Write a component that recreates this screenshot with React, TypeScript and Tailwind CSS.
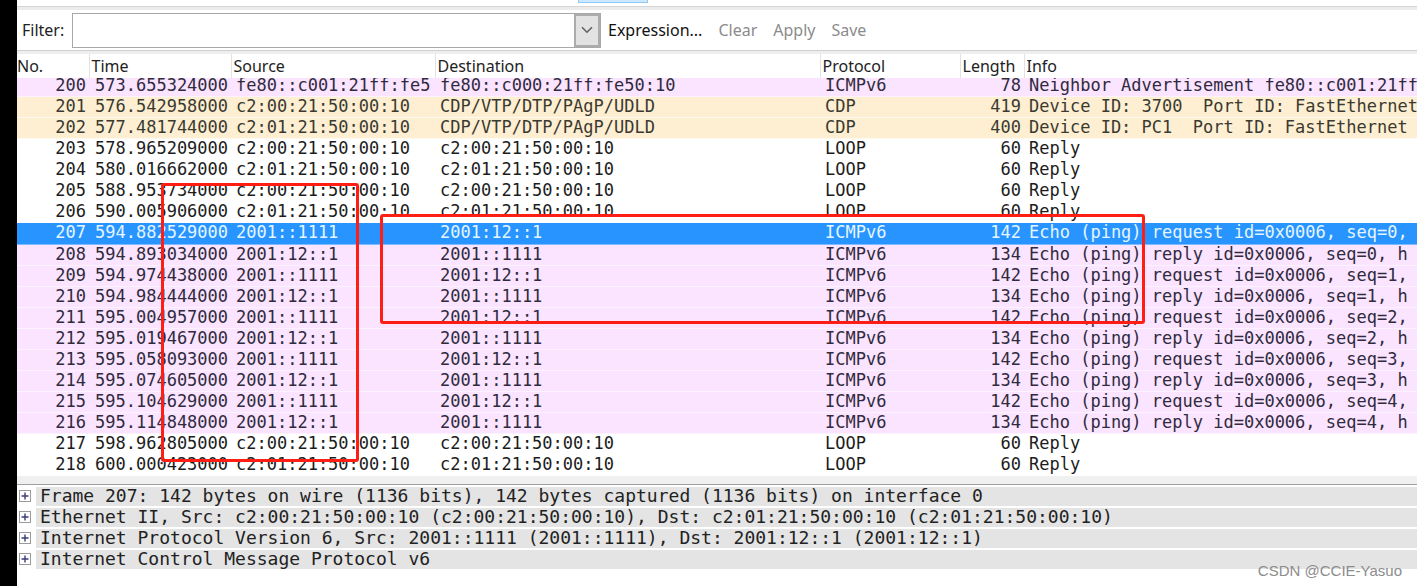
import React from "react";

type Tone = "icmp" | "cdp" | "plain" | "selected";

interface Packet {
  no: number;
  time: string;
  source: string;
  destination: string;
  protocol: string;
  length: number;
  info: string;
  tone: Tone;
}

const HOST_0 = "c2:00:21:50:00:10";
const HOST_1 = "c2:01:21:50:00:10";

const loop = (no: number, time: string, host: string): Packet => ({
  no,
  time,
  source: host,
  destination: host,
  protocol: "LOOP",
  length: 60,
  info: "Reply",
  tone: "plain",
});

const cdp = (no: number, time: string, host: string, length: number, info: string): Packet => ({
  no,
  time,
  source: host,
  destination: "CDP/VTP/DTP/PAgP/UDLD",
  protocol: "CDP",
  length,
  info,
  tone: "cdp",
});

const ping = (no: number, time: string, kind: "request" | "reply", seq: number, tone: Tone = "icmp"): Packet => ({
  no,
  time,
  source: kind === "request" ? "2001::1111" : "2001:12::1",
  destination: kind === "request" ? "2001:12::1" : "2001::1111",
  protocol: "ICMPv6",
  length: kind === "request" ? 142 : 134,
  info: kind === "request" ? `Echo (ping) request id=0x0006, seq=${seq},` : `Echo (ping) reply id=0x0006, seq=${seq}, h`,
  tone,
});

const packets: Packet[] = [
  {
    no: 200,
    time: "573.655324000",
    source: "fe80::c001:21ff:fe5",
    destination: "fe80::c000:21ff:fe50:10",
    protocol: "ICMPv6",
    length: 78,
    info: "Neighbor Advertisement fe80::c001:21ff",
    tone: "icmp",
  },
  cdp(201, "576.542958000", HOST_0, 419, "Device ID: 3700  Port ID: FastEthernet"),
  cdp(202, "577.481744000", HOST_1, 400, "Device ID: PC1  Port ID: FastEthernet"),
  loop(203, "578.965209000", HOST_0),
  loop(204, "580.016662000", HOST_1),
  loop(205, "588.953734000", HOST_0),
  loop(206, "590.005906000", HOST_1),
  ping(207, "594.882529000", "request", 0, "selected"),
  ping(208, "594.893034000", "reply", 0),
  ping(209, "594.974438000", "request", 1),
  ping(210, "594.984444000", "reply", 1),
  ping(211, "595.004957000", "request", 2),
  ping(212, "595.019467000", "reply", 2),
  ping(213, "595.058093000", "request", 3),
  ping(214, "595.074605000", "reply", 3),
  ping(215, "595.104629000", "request", 4),
  ping(216, "595.114848000", "reply", 4),
  loop(217, "598.962805000", HOST_0),
  loop(218, "600.000423000", HOST_1),
];

const toneClass: Record<Tone, string> = {
  icmp: "h-[21px] bg-[#fbe4ff] text-[#2f2b3d] border-b border-[#fdf3ff]",
  cdp: "h-[21px] bg-[#ffefd2] text-[#3a3a30] border-b border-[#fffaf0]",
  plain: "h-[21px] bg-white text-[#1c1c1c] border-b border-white",
  selected: "h-[22px] bg-[#2894ff] text-[#e4f6ff] border-b border-[#7fbcff]",
};

const details = [
  "Frame 207: 142 bytes on wire (1136 bits), 142 bytes captured (1136 bits) on interface 0",
  "Ethernet II, Src: c2:00:21:50:00:10 (c2:00:21:50:00:10), Dst: c2:01:21:50:00:10 (c2:01:21:50:00:10)",
  "Internet Protocol Version 6, Src: 2001::1111 (2001::1111), Dst: 2001:12::1 (2001:12::1)",
  "Internet Control Message Protocol v6",
];

const columns = [
  { label: "No.", className: "w-[72px]" },
  { label: "Time", className: "w-[142px] border-l pl-[2px]" },
  { label: "Source", className: "w-[204px] border-l pl-[2px]" },
  { label: "Destination", className: "w-[385px] border-l pl-[2px]" },
  { label: "Protocol", className: "w-[140px] border-l pl-[2px]" },
  { label: "Length", className: "w-[64px] border-l pl-[2px]" },
  { label: "Info", className: "border-l pl-[2px]" },
];

function FilterBar() {
  return (
    <form className="flex h-10 items-center pl-[5px]" onSubmit={(e) => e.preventDefault()}>
      <label htmlFor="filter" className="w-[50px] text-[#222]">
        Filter:
      </label>
      <div className="flex h-[35px] w-[529px] border border-[#a8a8a8] bg-white">
        <input id="filter" type="text" className="min-w-0 flex-1 px-2 outline-none" />
        <button
          type="button"
          aria-label="Filter history"
          className="flex w-[26px] items-center justify-center border-2 border-[#acacac] bg-[#e2e2e2]"
        >
          <svg width="12" height="8" viewBox="0 0 12 8" fill="none" stroke="#606060" strokeWidth="1.6">
            <path d="M1 1.2 6 6.2 11 1.2" />
          </svg>
        </button>
      </div>
      <div className="flex gap-4 pl-[7px]">
        <button type="button" className="text-[#111]">
          Expression...
        </button>
        <button type="button" disabled className="text-[#8b8b8b]">
          Clear
        </button>
        <button type="button" disabled className="text-[#8b8b8b]">
          Apply
        </button>
        <button type="button" disabled className="text-[#8b8b8b]">
          Save
        </button>
      </div>
    </form>
  );
}

function PacketRow({ packet, clipped }: { packet: Packet; clipped: boolean }) {
  const line = clipped
    ? "flex h-[17px] flex-col justify-end overflow-hidden whitespace-pre leading-5"
    : "overflow-hidden whitespace-pre leading-[19px]";
  return (
    <tr
      className={
        clipped
          ? "h-[18px] border-b border-[#fdf3ff] bg-[#fbe4ff] align-top text-[#2f2b3d]"
          : `${toneClass[packet.tone]} align-top`
      }
    >
      <td className="p-0 pr-[3px] text-right"><div className={line}>{packet.no}</div></td>
      <td className="p-0 pl-[6px]"><div className={line}>{packet.time}</div></td>
      <td className="p-0 pl-[5px]"><div className={line}>{packet.source}</div></td>
      <td className="p-0 pl-[5px]"><div className={line}>{packet.destination}</div></td>
      <td className="p-0 pl-[5px]"><div className={line}>{packet.protocol}</div></td>
      <td className="p-0 pr-[3px] text-right"><div className={line}>{packet.length}</div></td>
      <td className="p-0 pl-[5px]"><div className={line}>{packet.info}</div></td>
    </tr>
  );
}

function PacketList() {
  return (
    <table className="w-full table-fixed border-collapse">
      <thead>
        <tr className="h-6 text-left text-[#222]">
          {columns.map((c) => (
            <th key={c.label} scope="col" className={`${c.className} border-[#e2e2e2] py-0 pr-0 font-normal leading-6`}>
              {c.label}
            </th>
          ))}
        </tr>
      </thead>
      <tbody className="font-['DejaVu_Sans_Mono',monospace] text-[17px]">
        {packets.map((p, i) => (
          <PacketRow key={p.no} packet={p} clipped={i === 0} />
        ))}
      </tbody>
    </table>
  );
}

function DetailTree() {
  return (
    <ul className="pt-px font-['DejaVu_Sans_Mono',monospace] text-[18px] text-[#222]">
      {details.map((text) => (
        <li key={text} className="flex h-[21px] items-center pl-[2px]">
          <button
            type="button"
            aria-label={`Expand ${text}`}
            className="flex size-3 shrink-0 items-center justify-center border border-[#9a9a9a] bg-white"
          >
            <svg width="8" height="8" viewBox="0 0 8 8" stroke="#3c3c78" strokeWidth="1.4">
              <path d="M0.5 4H7.5M4 0.5V7.5" />
            </svg>
          </button>
          <span className="ml-[5px] h-[19px] min-w-0 flex-1 whitespace-pre bg-[#e4e4e4] pl-1 leading-[18px]">
            {text}
          </span>
        </li>
      ))}
    </ul>
  );
}

export default function App() {
  return (
    <div className="relative flex min-h-screen overflow-hidden bg-white font-['Noto_Sans',sans-serif] text-[16px]">
      <div className="w-[17px] shrink-0 bg-black" />
      <main className="min-w-0 flex-1">
        <div className="h-[6px] pl-[561px]">
          <div className="h-[3px] w-[70px] border border-t-0 border-[#90c8f6] bg-[#cce8ff]" />
        </div>
        <div className="h-1 border-t border-[#d4d4d4] bg-[#ececec]" />
        <FilterBar />
        <div className="h-1 border-t border-[#cfcfcf] bg-[#efefef]" />
        <PacketList />
        <div className="h-[9px] border-b border-[#a0a0a0] bg-[#f0f0f0]" />
        <DetailTree />
      </main>
      <div className="pointer-events-none absolute left-[161px] top-[183px] h-[279px] w-[198px] rounded-[3px] border-3 border-[#ff1e14]" />
      <div className="pointer-events-none absolute left-[380px] top-[214px] h-[110px] w-[765px] rounded-[3px] border-3 border-[#ff1e14]" />
      <p className="absolute bottom-[5px] right-[15px] font-['Liberation_Sans',sans-serif] text-[15px] leading-5 text-[#8c8c8c]">
        CSDN @CCIE-Yasuo
      </p>
    </div>
  );
}
